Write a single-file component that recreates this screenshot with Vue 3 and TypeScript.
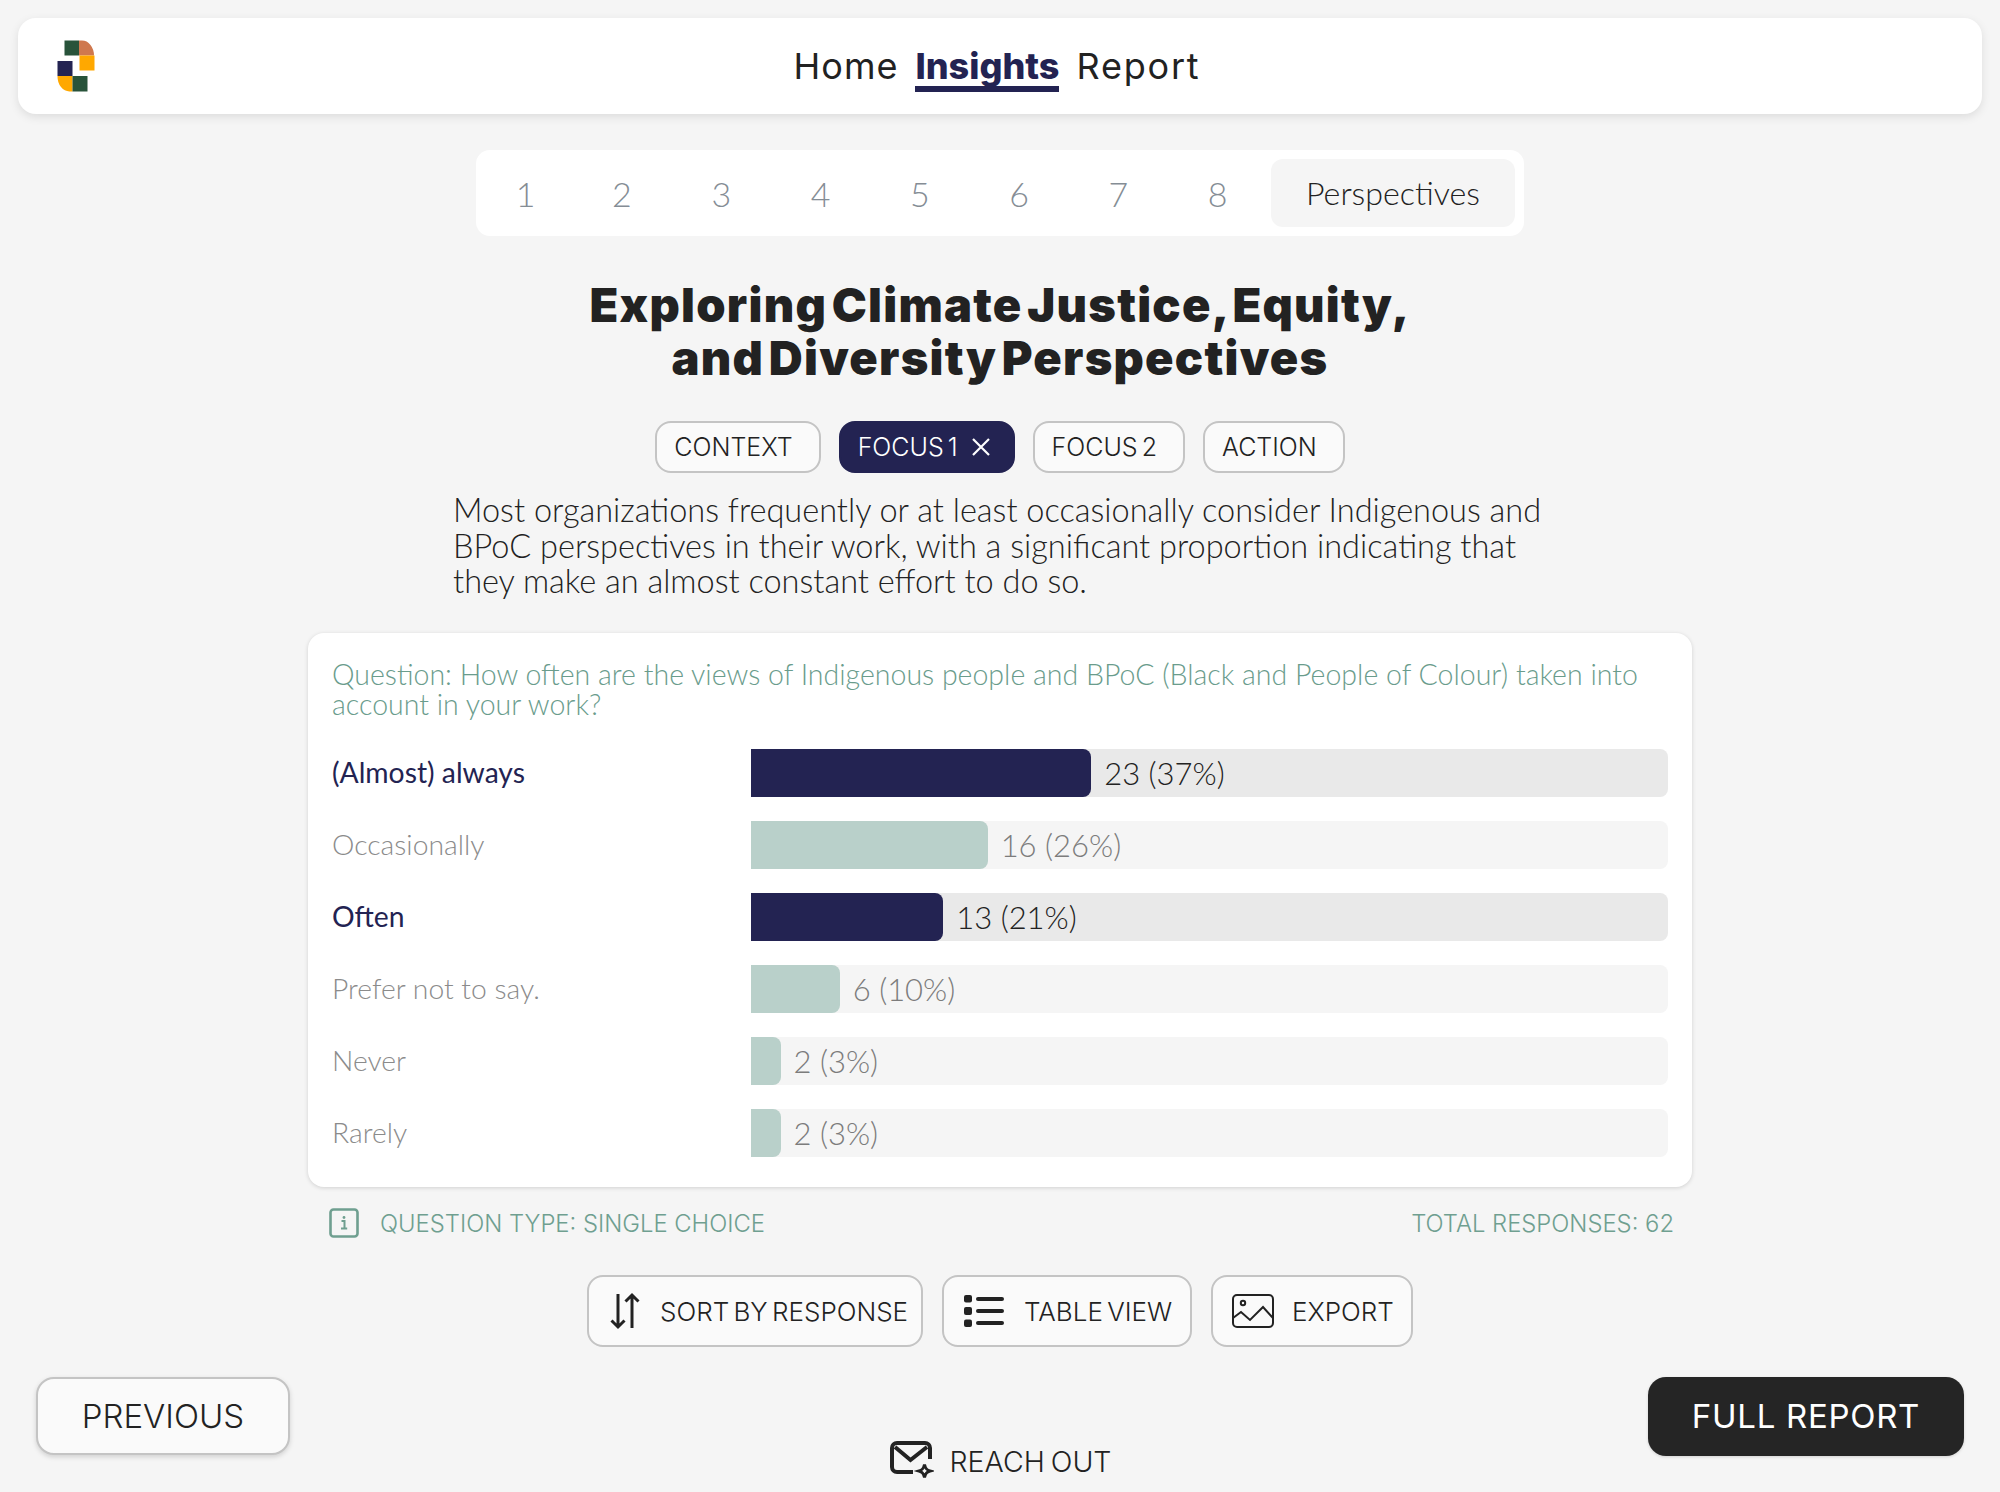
<script setup lang="ts">
interface Row { label: string; count: number; strong: boolean }
const steps: string[] = ['1', '2', '3', '4', '5', '6', '7', '8']
const rows: Row[] = [
  { label: '(Almost) always', count: 23, strong: true },
  { label: 'Occasionally', count: 16, strong: false },
  { label: 'Often', count: 13, strong: true },
  { label: 'Prefer not to say.', count: 6, strong: false },
  { label: 'Never', count: 2, strong: false },
  { label: 'Rarely', count: 2, strong: false },
]
const total = 62
const pct = (c: number): string => `${(c / total) * 100}%`
const rounded = (c: number): number => Math.floor((c / total) * 100 + 0.5)
</script>

<template>
  <div class="page">
    <header class="topbar">
      <svg class="logo" width="38" height="52" viewBox="0 0 38 52">
        <rect x="7.5" y="0.5" width="14.5" height="15" fill="#28533a" />
        <path d="M22 0.5h3a12 15 0 0 1 12 15H22z" fill="#cf784e" />
        <rect x="22.5" y="15.5" width="15" height="15" fill="#ffa800" />
        <rect x="0.5" y="21" width="15" height="15" fill="#232352" />
        <path d="M0.5 36H15.5V51.5h-3a12 15 0 0 1-12-15z" fill="#ffa800" />
        <rect x="15.5" y="36" width="15" height="15.5" fill="#28533a" />
      </svg>
      <nav class="nav">
        <span>Home</span>
        <span class="nav-active">Insights</span>
        <span class="nav-report">Report</span>
      </nav>
    </header>

    <div class="stepper">
      <span v-for="s in steps" :key="s" class="step">{{ s }}</span>
      <span class="step-active">Perspectives</span>
    </div>

    <h1 class="title">Exploring Climate Justice, Equity,<br />and Diversity Perspectives</h1>

    <div class="chips">
      <span class="chip">CONTEXT</span>
      <span class="chip chip-on">FOCUS 1
        <svg width="20" height="20" viewBox="0 0 20 20"><path d="M2 2l16 16M18 2L2 18" stroke="#fff" stroke-width="2.2" fill="none" /></svg>
      </span>
      <span class="chip">FOCUS 2</span>
      <span class="chip">ACTION</span>
    </div>

    <p class="lead">Most organizations frequently or at least occasionally consider Indigenous and BPoC perspectives in their work, with a significant proportion indicating that they make an almost constant effort to do so.</p>

    <section class="card">
      <p class="question">Question: How often are the views of Indigenous people and BPoC (Black and People of Colour) taken into account in your work?</p>
      <div class="rows">
        <div v-for="r in rows" :key="r.label" class="row" :class="{ strong: r.strong }">
          <span class="label">{{ r.label }}</span>
          <div class="track">
            <div class="fill" :style="{ width: pct(r.count) }"></div>
            <span class="value">{{ r.count }} ({{ rounded(r.count) }}%)</span>
          </div>
        </div>
      </div>
    </section>

    <div class="meta">
      <span class="meta-left">
        <svg width="30" height="30" viewBox="0 0 30 30">
          <rect x="1.5" y="1.5" width="27" height="27" rx="3" fill="none" stroke="#6f9f90" stroke-width="2.6" />
          <path d="M12.5 13h3v7M12 20.5h6.2" stroke="#6f9f90" stroke-width="2" fill="none" />
          <circle cx="15" cy="9.5" r="1.4" fill="#6f9f90" />
        </svg>
        QUESTION TYPE: SINGLE CHOICE
      </span>
      <span>TOTAL RESPONSES: 62</span>
    </div>

    <div class="tools">
      <button class="tool tool-sort">
        <svg width="30" height="38" viewBox="0 0 30 38" fill="none" stroke="#222" stroke-width="3">
          <path d="M8 2v33M1.5 28.5L8 35l6.5-6.5" />
          <path d="M22 36V3M15.5 9.5L22 3l6.500 6.500" />
        </svg>
        SORT BY RESPONSE
      </button>
      <button class="tool tool-table">
        <svg width="40" height="32" viewBox="0 0 40 32" fill="#222">
          <rect x="0" y="0" width="8" height="7.500" rx="2" />
          <rect x="0" y="12" width="8" height="8" rx="2" />
          <rect x="0" y="24.500" width="8" height="7.500" rx="2" />
          <rect x="12" y="2" width="28" height="4" rx="2" />
          <rect x="12" y="14" width="28" height="4" rx="2" />
          <rect x="12" y="26" width="28" height="4" rx="2" />
        </svg>
        TABLE VIEW
      </button>
      <button class="tool tool-export">
        <svg width="42" height="34" viewBox="0 0 42 34" fill="none" stroke="#222" stroke-width="2">
          <rect x="1" y="1" width="40" height="32" rx="4" />
          <circle cx="11" cy="9" r="2.200" />
          <path d="M1 24l8-6 9 8L31 13l10 11" />
        </svg>
        EXPORT
      </button>
    </div>

    <footer class="foot">
      <button class="prev">PREVIOUS</button>
      <div class="reach">
        <svg width="44" height="40" viewBox="0 0 44 40" fill="none" stroke="#222" stroke-width="4">
          <path d="M23 31H7a5 5 0 0 1-5-5V7a5 5 0 0 1 5-5h28a5 5 0 0 1 5 5v11" />
          <path d="M5 6l15.500 13L37 6" />
          <path d="M34.500 23.500c1 4 2 5.500 5.500 6.500-3.500 1-4.500 2.500-5.500 6.500-1-4-2-5.500-5.500-6.500 3.500-1 4.500-2.500 5.500-6.500z" stroke-width="3" />
        </svg>
        REACH OUT
      </div>
      <button class="next">FULL REPORT</button>
    </footer>
  </div>
</template>

<style>
html, body { margin: 0; background: #f5f5f5; }
</style>

<style scoped>
.page {
  box-sizing: border-box;
  width: 2000px;
  height: 1492px;
  overflow: hidden;
  padding-top: 18px;
  display: flex;
  flex-direction: column;
  align-items: center;
  background: #f5f5f5;
  color: #222;
  font-family: "Lato", "Liberation Sans", sans-serif;
  font-weight: 300;
}
.topbar {
  box-sizing: border-box;
  width: 1964px;
  height: 96px;
  background: #fff;
  border-radius: 18px;
  box-shadow: 0 3px 10px rgba(0, 0, 0, 0.1);
  position: relative;
  display: flex;
  align-items: center;
  justify-content: center;
}
.logo { position: absolute; left: 39px; top: 22px; }
.nav {
  display: flex;
  gap: 17px;
  font-family: "Inter", sans-serif;
  font-size: 36px;
  line-height: 40px;
  font-weight: 400;
  margin: -1px 0 0 -6px;
  letter-spacing: 1px;
}
.nav-active {
  font-weight: 800;
  color: #232352;
  border-bottom: 6px solid #232352;
  margin-bottom: -6px;
  letter-spacing: 0;
}
.nav-report { letter-spacing: 1.800px; }
.stepper {
  box-sizing: border-box;
  margin-top: 36px;
  width: 1048px;
  height: 86px;
  background: #fff;
  border-radius: 14px;
  padding: 9px 9px 9px 0;
  display: flex;
  align-items: center;
  font-size: 34px;
}
.step {
  width: 99.300px;
  text-align: center;
  color: #858d95;
}
.step:first-child { margin-left: -3px; text-indent: 6px; }
.step-active {
  margin-left: auto;
  width: 244px;
  height: 68px;
  line-height: 68px;
  text-align: center;
  background: #f5f5f5;
  border-radius: 12px;
  font-size: 32.200px;
}
.title {
  margin: 42px 0 0;
  text-align: center;
  font-family: "Inter", sans-serif;
  font-size: 47px;
  line-height: 53px;
  font-weight: 900;
  letter-spacing: 1.250px;
  word-spacing: -6px;
}
.chips {
  margin-top: 37px;
  display: flex;
  gap: 18px;
  height: 52px;
}
.chip {
  box-sizing: border-box;
  height: 52px;
  padding: 0 26px 0 17px;
  display: flex;
  align-items: center;
  gap: 11px;
  border: 2px solid #c4c4c4;
  border-radius: 16px;
  background: #fafafa;
  font-family: "Inter", sans-serif;
  font-size: 25px;
  font-weight: 300;
  white-space: nowrap;
  word-spacing: -3px;
}
.chip-on { background: #232352; border-color: #232352; color: #fff; padding-right: 22px; gap: 13px; }
.lead {
  width: 1094px;
  margin: 19px 0 0;
  font-size: 32.500px;
  line-height: 35.500px;
}
.card {
  box-sizing: border-box;
  margin-top: 34.500px;
  width: 1384px;
  height: 554px;
  background: #fff;
  border-radius: 16px;
  box-shadow: 0 1px 4px rgba(0, 0, 0, 0.15);
  padding: 26px 24px 30px;
}
.question {
  margin: 0;
  color: #6a9c8c;
  font-size: 28.500px;
  line-height: 30px;
}
.rows {
  margin-top: 30px;
  display: flex;
  flex-direction: column;
  gap: 24px;
}
.row {
  display: flex;
  align-items: center;
  height: 48px;
  color: #8b8b8b;
}
.label {
  width: 419px;
  flex: none;
  font-size: 28.300px;
  padding-bottom: 3px;
}
.track {
  flex: 1;
  height: 48px;
  display: flex;
  align-items: center;
  background: #f5f5f5;
  border-radius: 8px;
  font-size: 31px;
}
.fill {
  height: 100%;
  background: #b9d0ca;
  border-radius: 0 8px 8px 0;
}
.value { margin-left: 13px; color: #7c7c7c; }
.strong .label { color: #232352; font-weight: 400; }
.strong .track { background: #e9e9e9; }
.strong .fill { background: #232352; }
.strong .value { color: #222; }
.meta {
  box-sizing: border-box;
  width: 1384px;
  margin-top: 21px;
  padding: 0 18px 0 21px;
  display: flex;
  justify-content: space-between;
  align-items: center;
  color: #6f9f90;
  font-family: "Inter", sans-serif;
  font-size: 23.800px;
  font-weight: 300;
  height: 30px;
}
.meta-left { display: flex; align-items: center; gap: 21px; }
.tools {
  margin-top: 37px;
  display: flex;
  gap: 19px;
}
.tool {
  box-sizing: border-box;
  height: 72px;
  display: flex;
  align-items: center;
  border: 2px solid #c4c4c4;
  border-radius: 16px;
  background: #fafafa;
  color: #222;
  font-family: "Inter", sans-serif;
  font-size: 26px;
  font-weight: 300;
  word-spacing: -3px;
  padding: 0;
  white-space: nowrap;
}
.tool-sort { width: 336px; padding-left: 21px; gap: 20px; }
.tool-table { width: 250px; padding-left: 20px; gap: 20px; }
.tool-export { width: 202px; padding-left: 19px; gap: 18px; }
.foot {
  box-sizing: border-box;
  width: 100%;
  margin-top: 30px;
  padding: 0 36px;
  display: flex;
  justify-content: space-between;
  align-items: flex-start;
}
.prev, .next {
  font-family: "Inter", sans-serif;
  font-size: 33px;
  border-radius: 18px;
  padding: 0;
  height: 78px;
}
.prev {
  width: 254px;
  border: 2px solid #c4c4c4;
  background: #fafafa;
  color: #222;
  font-weight: 300;
  box-shadow: 0 2px 5px rgba(0, 0, 0, 0.15);
}
.next {
  width: 316px;
  height: 79px;
  padding-bottom: 2px;
  border: none;
  background: #252525;
  color: #fff;
  font-weight: 400;
  letter-spacing: 0.700px;
  box-shadow: 0 1px 3px rgba(0, 0, 0, 0.15);
}
.reach {
  display: flex;
  align-items: center;
  gap: 16px;
  font-family: "Inter", sans-serif;
  font-size: 28.500px;
  font-weight: 300;
  word-spacing: -2px;
  margin-top: 64px;
  margin-left: 63px;
}
</style>
